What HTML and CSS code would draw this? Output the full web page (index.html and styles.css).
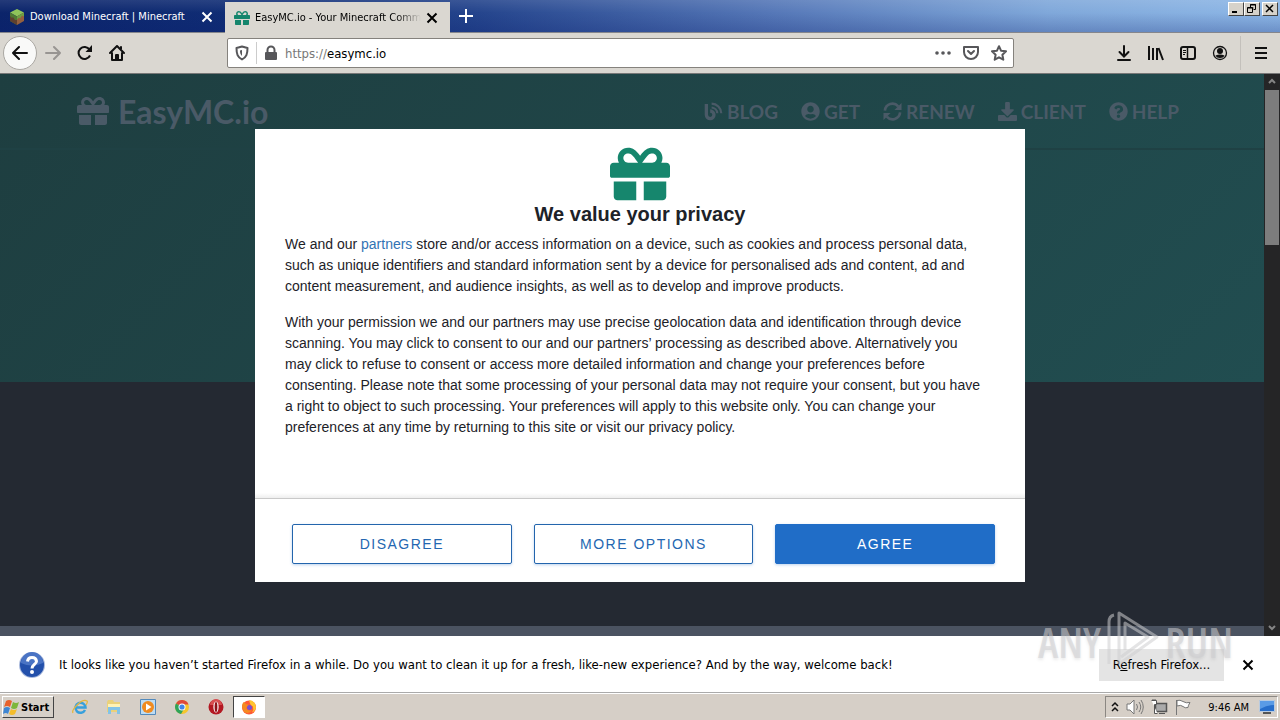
FILE: index.html
```html
<!DOCTYPE html>
<html lang="en">
<head>
<meta charset="utf-8">
<title>EasyMC.io - Your Minecraft Community</title>
<link rel="stylesheet" href="styles.css">
</head>
<body>
<svg class="defs" aria-hidden="true">
  <symbol id="gift" viewBox="0 0 512 512"><path d="M32 448c0 17.700 14.300 32 32 32h160V320H32v128zm256 32h160c17.700 0 32-14.300 32-32V320H288v160zm192-320h-42.100c6.200-12.100 10.100-25.500 10.100-40 0-48.500-39.500-88-88-88-41.600 0-68.500 21.300-103 68.300-34.500-47-61.400-68.300-103-68.300-48.500 0-88 39.500-88 88 0 14.500 3.800 27.900 10.100 40H32c-17.700 0-32 14.300-32 32v80c0 8.800 7.200 16 16 16h480c8.800 0 16-7.200 16-16v-80c0-17.700-14.300-32-32-32zm-326.100 0c-22.100 0-40-17.900-40-40s17.900-40 40-40c19.900 0 34.600 3.300 86.100 80h-86.100zm206.100 0h-86.100c51.400-76.500 65.700-80 86.100-80 22.100 0 40 17.900 40 40s-17.900 40-40 40z"/></symbol>
  <symbol id="cross" viewBox="0 0 12 12"><path d="M1.500 1.500l9 9M10.500 1.500l-9 9" fill="none" stroke="currentColor" stroke-width="2"/></symbol>
</svg>

<div class="tabs">
  <div class="tab">
    <svg class="favicon" viewBox="0 0 16 16"><path d="M8 0l7 3.500L8 7.500 1 3.500z" fill="#8fc45a"/><path d="M1 3.500l7 4V16l-7-4z" fill="#4f7a33"/><path d="M15 3.500l-7 4V16l7-4z" fill="#94603f"/><path d="M15 3.500l-7 4v3l2-2 1 1 2-3 2 1z" fill="#6da043"/><path d="M1 7l2 2 1-1 2 3 2 0v5l-7-4z" fill="#5d4030"/></svg>
    <span class="tab-title">Download Minecraft | Minecraft</span>
    <button class="plain" aria-label="Close tab"><svg class="x"><use href="#cross"/></svg></button>
  </div>
  <div class="tab active">
    <svg class="favicon green"><use href="#gift"/></svg>
    <span class="tab-title fade">EasyMC.io - Your Minecraft Community</span>
    <button class="plain" aria-label="Close tab"><svg class="x"><use href="#cross"/></svg></button>
  </div>
  <button class="plain new-tab" aria-label="New tab"><svg width="14" height="14" viewBox="0 0 14 14"><path d="M7 0v14M0 7h14" stroke="#fff" stroke-width="2"/></svg></button>
  <div class="window-buttons">
    <button aria-label="Minimize"><svg width="10" height="10" viewBox="0 0 10 10"><path d="M1 8h5" stroke="#000" stroke-width="2"/></svg></button>
    <button aria-label="Restore"><svg width="10" height="10" viewBox="0 0 10 10" fill="none" stroke="#000"><path d="M3.500 3.500v-3h5v5h-2M3 1h6M.500 4h6M.500 3.500h5v5h-5z"/></svg></button>
    <button class="close" aria-label="Close"><svg width="10" height="10" viewBox="0 0 10 10"><path d="M1 1l7 7M8 1L1 8" stroke="#000" stroke-width="1.500"/></svg></button>
  </div>
</div>

<div class="toolbar">
  <div class="nav-buttons">
    <button class="plain back" aria-label="Back"><svg width="16" height="16" viewBox="0 0 16 16" fill="none" stroke="#111" stroke-width="2" stroke-linecap="round" stroke-linejoin="round"><path d="M15 8H1M7 2L1 8l6 6"/></svg></button>
    <button class="plain" aria-label="Forward"><svg width="16" height="16" viewBox="0 0 16 16" fill="none" stroke="#989592" stroke-width="2" stroke-linecap="round" stroke-linejoin="round"><path d="M1 8h14M9 2l6 6-6 6"/></svg></button>
    <button class="plain" aria-label="Reload"><svg width="16" height="16" viewBox="0 0 16 16" fill="none" stroke="#111" stroke-width="2"><path d="M13 10.500A6 6 0 1 1 12.500 4.500"/><path d="M15 0v7H8.500z" fill="#111" stroke="none"/></svg></button>
    <button class="plain" aria-label="Home"><svg width="16" height="16" viewBox="0 0 16 16" fill="none" stroke="#111" stroke-width="2" stroke-linejoin="round" stroke-linecap="round"><path d="M1 8l7-7 7 7M3 8v7h10V8M12 2v2"/><path d="M7 14v-4h2v4" /></svg></button>
  </div>
  <div class="address">
    <svg width="14" height="16" viewBox="0 0 14 16" fill="none" stroke="#57575a" stroke-width="2"><path d="M7 1.500l5.500 1.500c0 6-1 9-5.500 11.500C2.500 12 1.500 9 1.500 3z" stroke-linejoin="round"/><path d="M7 5v6c-1.500-1.500-2-3-2-5.500z" fill="#57575a" stroke="none"/></svg>
    <span class="divider"></span>
    <svg width="14" height="16" viewBox="0 0 14 16"><rect x="1" y="7" width="12" height="8" rx="1" fill="#57575a"/><path d="M3.500 8V5a3.500 3.500 0 0 1 7 0v3" fill="none" stroke="#57575a" stroke-width="2"/></svg>
    <div class="url"><span>https://</span>easymc.io</div>
    <div class="address-icons">
      <button class="plain" aria-label="Page actions"><svg width="16" height="16" viewBox="0 0 16 16" fill="#57575a"><circle cx="2" cy="8" r="1.800"/><circle cx="8" cy="8" r="1.800"/><circle cx="14" cy="8" r="1.800"/></svg></button>
      <button class="plain" aria-label="Save to Pocket"><svg width="16" height="16" viewBox="0 0 16 16" fill="none" stroke="#57575a" stroke-width="2" stroke-linecap="round" stroke-linejoin="round"><path d="M1 2h14v5a7 7 0 0 1-14 0zM5 6l3 3 3-3"/></svg></button>
      <button class="plain" aria-label="Bookmark"><svg width="16" height="16" viewBox="0 0 16 16" fill="none" stroke="#57575a" stroke-width="2" stroke-linejoin="round"><path d="M8 1.200l2 4.500 5 .600-3.600 3.400.9 5L8 12.300l-4.300 2.400.9-5L1 6.300l5-.600z"/></svg></button>
    </div>
  </div>
  <div class="tools">
    <button class="plain" aria-label="Downloads"><svg width="16" height="16" viewBox="0 0 16 16" fill="none" stroke="#111" stroke-width="2" stroke-linecap="round"><path d="M8 1v10M3.500 7L8 11.500 12.500 7M2 15h12"/></svg></button>
    <button class="plain" aria-label="Library"><svg width="16" height="16" viewBox="0 0 16 16" stroke="#111" stroke-width="2"><path d="M1 1v14M5 3v12M9 3v12M10.500 3l4.500 12"/></svg></button>
    <button class="plain" aria-label="Sidebar"><svg width="16" height="16" viewBox="0 0 16 16" fill="none" stroke="#111"><rect x="1" y="2" width="14" height="12" rx="2" stroke-width="2"/><path d="M7.500 2v12" stroke-width="1.500"/><path d="M3 5.500h3M3 7.500h3M3 9.500h2"/></svg></button>
    <button class="plain" aria-label="Account"><svg width="16" height="16" viewBox="0 0 16 16"><circle cx="8" cy="8" r="6.500" fill="none" stroke="#111" stroke-width="1.300"/><circle cx="8" cy="6" r="3" fill="#111"/><path d="M3.500 10.500q4.500-2 9 0Q11.500 13 8 13t-4.500-2.500z" fill="#111"/></svg></button>
    <button class="plain menu" aria-label="Menu"><svg width="14" height="14" viewBox="0 0 14 14" stroke="#111" stroke-width="2"><path d="M1 2h12M1 7h12M1 12h12"/></svg></button>
  </div>
</div>

<main class="viewport">
  <div class="site">
    <header class="site-header">
      <a class="brand" href="#"><svg class="brand-icon"><use href="#gift"/></svg>EasyMC.io</a>
      <nav class="site-nav">
        <a href="#"><svg viewBox="0 0 20 20" fill="none" stroke="currentColor" stroke-width="3.500"><path d="M2.500 2v11.500a4 4 0 1 0 4-4"/><path d="M8 5.800a6.500 6.500 0 0 1 6 6M8 1.700a10.500 10.500 0 0 1 10.200 10.200" stroke-width="2.300"/></svg>BLOG</a>
        <a href="#"><svg viewBox="0 0 496 512"><path d="M248 8C111 8 0 119 0 256s111 248 248 248 248-111 248-248S385 8 248 8zm0 96c48.600 0 88 39.400 88 88s-39.400 88-88 88-88-39.400-88-88 39.400-88 88-88zm0 344c-58.700 0-111.300-26.600-146.500-68.200 18.800-35.400 55.600-59.800 98.500-59.800 2.400 0 4.800.4 7.100 1.100 13 4.200 26.600 6.900 40.900 6.900 14.300 0 28-2.700 40.900-6.900 2.300-.7 4.700-1.100 7.100-1.100 42.900 0 79.700 24.400 98.500 59.800C359.300 421.400 306.700 448 248 448z"/></svg>GET</a>
        <a href="#"><svg viewBox="0 0 20 20" fill="none" stroke="currentColor" stroke-width="2.800"><path d="M2 9a8 8 0 0 1 14-4.500M18 11a8 8 0 0 1-14 4.500"/><path d="M19.500 1v7.500H12zM.500 19v-7.500H8z" fill="currentColor" stroke="none"/></svg>RENEW</a>
        <a href="#"><svg viewBox="0 0 512 512"><path d="M216 0h80c13.300 0 24 10.700 24 24v168h87.700c17.800 0 26.700 21.500 14.100 34.100L269.700 378.300c-7.500 7.500-19.800 7.500-27.300 0L90.100 226.100c-12.600-12.600-3.700-34.100 14.100-34.100H192V24c0-13.300 10.700-24 24-24zm296 376v112c0 13.300-10.700 24-24 24H24c-13.300 0-24-10.700-24-24V376c0-13.300 10.700-24 24-24h146.700l49 49c20.100 20.100 52.500 20.100 72.600 0l49-49H488c13.300 0 24 10.700 24 24z"/></svg>CLIENT</a>
        <a href="#"><svg viewBox="0 0 512 512"><path d="M504 256c0 136.997-111.043 248-248 248S8 392.997 8 256C8 119.083 119.043 8 256 8s248 111.083 248 248zM262.655 90c-54.497 0-89.255 22.957-116.549 63.758-3.536 5.286-2.353 12.415 2.715 16.258l34.699 26.310c5.205 3.947 12.621 3.008 16.665-2.122 17.864-22.658 30.113-35.797 57.303-35.797 20.429 0 45.698 13.148 45.698 32.958 0 14.976-12.363 22.667-32.534 33.976C247.128 238.528 216 254.941 216 296v4c0 6.627 5.373 12 12 12h56c6.627 0 12-5.373 12-12v-1.333c0-28.462 83.186-29.647 83.186-106.667 0-58.002-60.165-102-116.531-102zM256 338c-25.365 0-46 20.635-46 46 0 25.364 20.635 46 46 46s46-20.636 46-46c0-25.365-20.635-46-46-46z"/></svg>HELP</a>
      </nav>
    </header>
    <div class="hero"></div>
    <div class="dark"></div>
    <div class="band"></div>
  </div>
  <div class="scrollbar">
    <svg viewBox="0 0 16 16" class="arrow"><path d="M5 9l3-3 3 3" fill="none" stroke="#858585" stroke-width="2"/></svg>
    <div class="thumb"></div>
    <svg viewBox="0 0 16 16" class="arrow"><path d="M5 6l3 3 3-3" fill="none" stroke="#858585" stroke-width="2"/></svg>
  </div>
  <div class="overlay">
    <section class="modal" role="dialog" aria-labelledby="privacy-title">
      <div class="modal-body">
        <svg class="modal-logo"><use href="#gift"/></svg>
        <h2 id="privacy-title">We value your privacy</h2>
        <p>We and our <a href="#">partners</a> store and/or access information on a device, such as cookies and process personal data, such as unique identifiers and standard information sent by a device for personalised ads and content, ad and content measurement, and audience insights, as well as to develop and improve products.</p>
        <p>With your permission we and our partners may use precise geolocation data and identification through device scanning. You may click to consent to our and our partners’ processing as described above. Alternatively you may click to refuse to consent or access more detailed information and change your preferences before consenting. Please note that some processing of your personal data may not require your consent, but you have a right to object to such processing. Your preferences will apply to this website only. You can change your preferences at any time by returning to this site or visit our privacy policy.</p>
      </div>
      <div class="modal-actions">
        <button>DISAGREE</button>
        <button>MORE OPTIONS</button>
        <button class="primary">AGREE</button>
      </div>
    </section>
  </div>
</main>

<div class="notice">
  <svg width="28" height="28" viewBox="0 0 28 28"><circle cx="14" cy="14" r="13" fill="#a9b9dc"/><circle cx="14" cy="14" r="12" fill="#2350ab"/><path d="M3 12a11 11 0 0 1 22 0q-11 5-22 0z" fill="#4a74c4"/><path d="M9.500 10.500q.500-4 4.500-4t4.500 3.700c0 3.300-4.500 3.300-4.500 7.300" fill="none" stroke="#fff" stroke-width="3"/><circle cx="14" cy="21" r="2" fill="#fff"/></svg>
  <span class="notice-text">It looks like you haven’t started Firefox in a while. Do you want to clean it up for a fresh, like-new experience? And by the way, welcome back!</span>
  <button class="refresh">R<u>e</u>fresh Firefox...</button>
  <button class="plain" aria-label="Dismiss"><svg class="x"><use href="#cross"/></svg></button>
  <div class="watermark">
    <span>ANY</span>
    <svg width="56" height="64" viewBox="0 0 56 64" fill="none" stroke="currentColor" stroke-width="3" stroke-linejoin="round"><path d="M4 54V12q0-6 5-7M14 54V3l38 24-38 27"/><path d="M20 40V13l23 14-27 20"/></svg>
    <span>RUN</span>
  </div>
</div>

<footer class="taskbar">
  <button class="start"><svg width="17" height="16" viewBox="0 0 17 16"><path d="M3 2q3-2 6 0L7 8Q4 6 1 8z" fill="#e8622c"/><path d="M10 3q3 2 6 0l-2 6q-3 2-6 0z" fill="#7db73a"/><path d="M1 9q3-2 6 0l-2 6q-2-2-5 0z" fill="#3f86d2"/><path d="M8 10q3 2 6 0l-2 5q-3 2-6 0z" fill="#f4bd2b"/></svg>Start</button>
  <div class="apps">
    <button class="plain" aria-label="Internet Explorer"><svg viewBox="0 0 16 16" fill="none"><path d="M13 11a5 5 0 1 1 .500-2.500H4" stroke="#37a0dc" stroke-width="2.500"/><path d="M1 14C-1 11 10-1 15 2q1 1-1 4" stroke="#e3b63e" stroke-width="1.300"/></svg></button>
    <button class="plain" aria-label="Explorer"><svg viewBox="0 0 16 16"><path d="M1 3l1-2h5l1 2h6v10H1z" fill="#ead17a"/><path d="M2 5h12v3H2z" fill="#fff2b5"/><path d="M2 15V8h12v7h-3v-4H5v4z" fill="#83c3e7"/></svg></button>
    <button class="plain" aria-label="Media Player"><svg viewBox="0 0 16 16"><path d="M.500.500h15v15H.500z" fill="#bddcf3" stroke="#5289bb"/><circle cx="8" cy="8" r="6" fill="#f08b20"/><path d="M6 4.500v7L11.500 8z" fill="#fff"/></svg></button>
    <button class="plain" aria-label="Chrome"><svg viewBox="0 0 16 16"><circle cx="8" cy="8" r="7" fill="#f5c62d"/><path d="M8 8L2 4.500a7 7 0 0 1 12.500 1H8z" fill="#df493b"/><path d="M8 8L2 4.500A7 7 0 0 0 7 15l3-5z" fill="#2fa35a"/><circle cx="8" cy="8" r="3.500" fill="#fff"/><circle cx="8" cy="8" r="2.600" fill="#4285e8"/></svg></button>
    <button class="plain" aria-label="Opera"><svg viewBox="0 0 16 16"><circle cx="8" cy="8" r="7.500" fill="#b31822"/><path d="M2 6a6 6 0 0 1 12 0z" fill="#d84d50"/><ellipse cx="8" cy="8" rx="2.600" ry="5.500" fill="#fff"/><ellipse cx="8" cy="8" rx="1.400" ry="5" fill="#8e1119"/></svg></button>
    <button class="plain running" aria-label="Firefox"><svg viewBox="0 0 16 16"><circle cx="8" cy="8.500" r="7" fill="#ff5a35"/><path d="M8 1q7 1 7 7.500-1 4-4 5 2-3 1-6-3-1-4-6.500z" fill="#ffc530"/><path d="M1 8q0-4 2-5l2 2 3 1-3 3q3 4 6 2-3 5-8 2z" fill="#f58a20"/><circle cx="8.500" cy="8.500" r="2.500" fill="#7951cf"/></svg></button>
  </div>
  <div class="tray">
    <svg width="8" height="12" viewBox="0 0 8 12" fill="none" stroke="#111" stroke-width="1.500"><path d="M1 5l3-3 3 3M1 10l3-3 3 3"/></svg>
    <svg width="18" height="16" viewBox="0 0 18 16" fill="#fff" stroke="#777"><path d="M1 5h3l4-4v14l-4-4H1z"/><path d="M10.500 5q2 3 0 6M13 3q3.500 5 0 10M15 1q4.500 7 0 14" fill="none"/></svg>
    <svg width="17" height="16" viewBox="0 0 17 16" fill="#fff" stroke="#555"><path d="M4.500 4.500h11v8h-11z" fill="#aaa" stroke-width="1.500"/><path d="M8 14.500h6M.500 1.500h5v4h-2v9h3M2 0v2M4 0v2"/></svg>
    <svg width="17" height="16" viewBox="0 0 17 16" fill="#fff" stroke="#777"><path d="M1.500 1v15M2 1.500q3-1 6 1t7 1q-2 3-2 5-3 1-5-1t-6-.500z"/></svg>
    <time>9:46 AM</time>
    <svg width="16" height="14" viewBox="0 0 16 14"><path d="M.500.500h15v11H.500z" fill="#276ecb" stroke="#b9cbe0"/><path d="M1 1h14v4q-7 0-14 4z" fill="#5a9be6"/><path d="M4 13h8" stroke="#555" stroke-width="2"/></svg>
  </div>
</footer>
</body>
</html>
```
FILE: styles.css
```css
* { box-sizing: border-box; }
body {
  margin: 0;
  height: 100vh;
  display: flex;
  flex-direction: column;
  overflow: hidden;
  font-family: "DejaVu Sans Condensed", "DejaVu Sans", sans-serif;
  font-stretch: condensed;
  font-size: 12px;
  color: #000;
}
svg { display: block; flex: none; }
svg:not([fill]) { fill: currentColor; }
button { font: inherit; color: inherit; padding: 0; margin: 0; border: 0; cursor: pointer; }
.defs { position: absolute; width: 0; height: 0; }
.plain { background: none; display: flex; align-items: center; justify-content: center; }
.x { width: 12px; height: 12px; }

.tabs {
  height: 33px;
  flex: none;
  display: flex;
  background: linear-gradient(rgba(255,255,255,0.1), transparent 40%, rgba(10,30,110,0.25)), linear-gradient(90deg, #0b246a 0%, #102d75 18%, #24448c 37%, #5577b7 60%, #80a8da 82%, #8db7e6 100%);
  border-bottom: 1px solid #85868c;
}
.tab { width: 225px; display: flex; align-items: center; gap: 5px; padding: 1px 12px 0 9px; color: #fff; font-size: 11px; }
.tab.active { margin-top: 2px; height: 31px; padding-top: 0; background: #dad7d1; color: #000; }
.favicon { width: 16px; height: 16px; }
.green { color: #15856c; }
.tab-title { flex: 1; min-width: 0; overflow: hidden; white-space: nowrap; }
.fade { mask-image: linear-gradient(90deg, #000 85%, transparent); }
.new-tab { width: 32px; }
.window-buttons { margin-left: auto; padding: 2px 2px 0 0; display: flex; height: 16px; }
.window-buttons button { width: 16px; height: 14px; padding: 1px 2px; background: #d6d2ca; border: 1px solid; border-color: #fff #444 #444 #fff; }
.window-buttons .close { margin-left: 2px; }

.toolbar { height: 41px; flex: none; display: flex; align-items: center; background: #dad7d1; border-bottom: 1px solid #777; }
.nav-buttons { width: 227px; display: flex; align-items: center; gap: 16px; padding-left: 3px; }
.back { width: 34px; height: 34px; border: 1px solid #aaa7a2; border-radius: 50%; background: #f9f9f8; }
.back + .plain { margin-left: -8px; }
.address { flex: 1; height: 30px; display: flex; align-items: center; gap: 7px; padding: 0 6px 0 7px; background: #fff; border: 1px solid #85827d; border-radius: 2px; }
.divider { width: 1px; height: 22px; background: #ccc; }
.url { flex: 1; font-size: 13px; }
.url span { color: #777; }
.address-icons { display: flex; gap: 12px; }
.tools { width: 266px; display: flex; align-items: center; justify-content: flex-end; gap: 16px; }
.menu { height: 34px; width: 40px; margin-left: -4px; border-left: 1px solid #c3c0bb; }

.viewport { flex: 1; min-height: 0; display: flex; position: relative; background: #242932; }
.site { flex: 1; display: flex; flex-direction: column; background: linear-gradient(135deg, #1e3e40, #214d50) top / 100% 308px no-repeat; }
.site-header { height: 76px; flex: none; display: flex; align-items: center; justify-content: space-between; padding: 0 85px 0 77px; border-bottom: 2px solid #1f4144; font-family: Lato, sans-serif; font-stretch: normal; font-weight: 700; }
.site-header a { color: #4a5a67; text-decoration: none; display: flex; align-items: center; }
.brand { font-size: 32px; gap: 9px; }
.brand-icon { width: 32px; height: 32px; }
.site-nav { display: flex; gap: 23px; font-size: 19px; }
.site-nav a { gap: 4px; }
.site-nav svg { width: 19px; height: 19px; }
.hero { height: 232px; flex: none; }
.dark { flex: 1; background: #242932; }
.band { height: 10px; flex: none; background: #4b5361; }
.scrollbar { width: 16px; display: flex; flex-direction: column; background: #252526; }
.arrow { width: 16px; height: 16px; }
.thumb { width: 14px; height: 155px; margin: 0 1px auto; background: #7d7d7d; }

.overlay { position: absolute; inset: 0; display: flex; align-items: center; justify-content: center; }
.modal { width: 770px; max-width: 100%; background: #fff; font-family: "Liberation Sans", Arial, sans-serif; font-stretch: normal; font-size: 14px; color: #1d2228; }
.modal-body { min-height: 370px; padding: 15px 30px; border-bottom: 1px solid #c9c9c9; background: linear-gradient(transparent 364px, #eee); }
.modal-logo { width: 60px; height: 60px; margin: 0 auto; color: #16866d; }
h2 { margin: 0; font-size: 20px; line-height: 20px; text-align: center; }
.modal p { margin: 10px 0 15px; padding-right: 10px; line-height: 21px; }
.modal p + p { margin: 0; }
.modal p a { color: #3273b4; text-decoration: none; }
.modal-actions { display: grid; grid-template-columns: repeat(3, 1fr); gap: 22px; padding: 25px 30px 18px 37px; }
.modal-actions button { height: 40px; border: 1px solid #2365ad; border-radius: 2px; background: #fff; color: #2467b1; font-size: 14px; letter-spacing: 1.5px; box-shadow: 0 1px 3px rgba(32,108,200,0.3); }
.modal-actions .primary { background: #206dc7; border-color: #206dc7; color: #fff; }

.notice { height: 57px; flex: none; display: flex; align-items: center; position: relative; padding: 1px 26px 0 18px; background: #fff; border-bottom: 1px solid #aaa; font-size: 13px; }
.notice-text { flex: 1; padding-left: 13px; white-space: nowrap; }
.refresh { width: 125px; height: 32px; margin-right: 18px; background: #e4e4e4; }
.watermark { position: absolute; right: 47px; bottom: 18px; display: flex; align-items: center; gap: 4px; color: rgba(205,205,208,0.55); font: 600 42px/64px "Open Sans", sans-serif; font-stretch: condensed; text-shadow: 0 2px 3px rgba(130,130,130,0.15); pointer-events: none; }

.taskbar { height: 27px; flex: none; display: flex; align-items: center; background: #d6cfc7; border-top: 1px solid #fff; }
.start { width: 52px; height: 22px; margin-left: 2px; display: flex; align-items: center; gap: 1px; background: #d6d0c8; border: 1px solid; border-color: #fff #444 #444 #fff; font-size: 11px; font-weight: 700; }
.apps { display: flex; align-items: center; margin-left: 9px; }
.apps button { width: 34px; height: 22px; }
.apps svg { width: 16px; height: 16px; }
.apps .running { width: 32px; background: #fff; border: 1px solid; border-color: #444 #fff #fff #444; }
.tray { height: 22px; margin-left: auto; margin-right: 2px; padding: 0 2px 0 5px; display: flex; align-items: center; gap: 7px; border: 1px solid; border-color: #8b8782 #fff #fff #8b8782; }
.tray time { padding: 0 3px 0 9px; font-size: 11px; }
```
